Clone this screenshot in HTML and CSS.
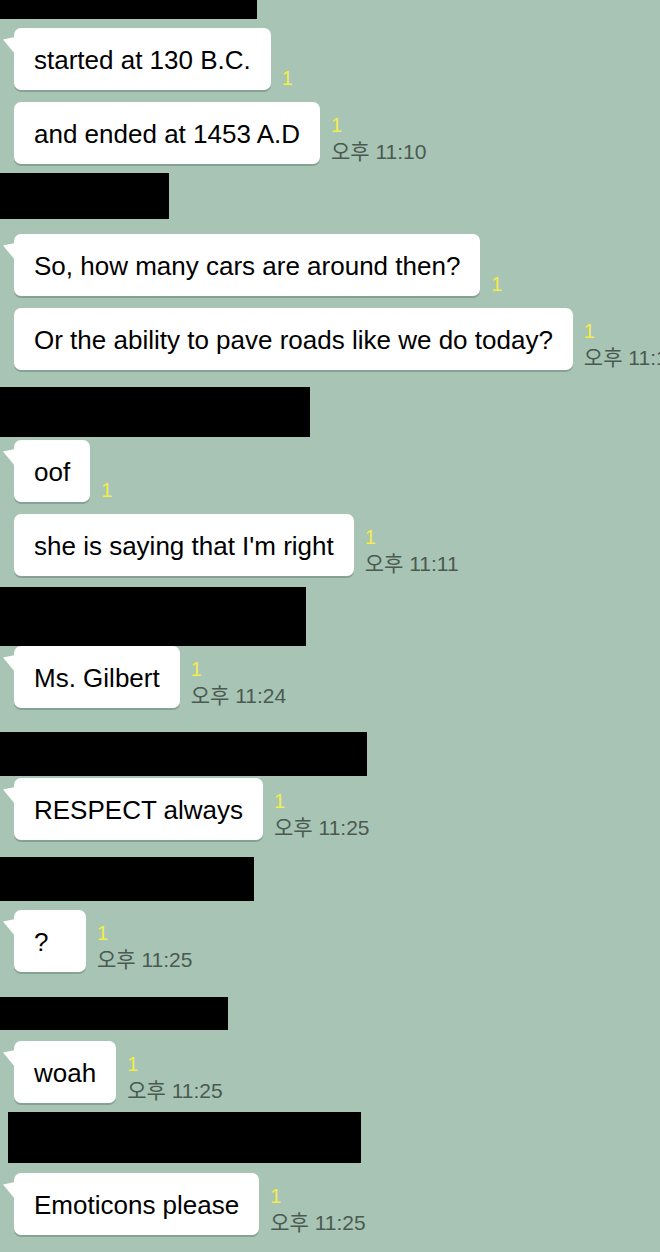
FILE: index.html
```html
<!DOCTYPE html>
<html lang="ko">
<head>
    <meta charset="UTF-8">
    <meta name="viewport" content="width=device-width, initial-scale=1.0">
    <title>Chat</title>
    <link rel="stylesheet" href="styles.css">
</head>
<body>
    <div class="chat">
        <div class="redact" style="width:257px;height:19px;margin-bottom:9px"></div>
        <div class="msg first">
            <div class="bubble">started at 130 B.C.</div>
            <div class="meta"><span class="read">1</span></div>
        </div>
        <div class="msg">
            <div class="bubble">and ended at 1453 A.D</div>
            <div class="meta"><span class="read">1</span><span class="time">오후 11:10</span></div>
        </div>

        <div class="redact" style="width:169px;height:46px;margin-top:9px;margin-bottom:15px"></div>
        <div class="msg first">
            <div class="bubble">So, how many cars are around then?</div>
            <div class="meta"><span class="read">1</span></div>
        </div>
        <div class="msg">
            <div class="bubble">Or the ability to pave roads like we do today?</div>
            <div class="meta"><span class="read">1</span><span class="time">오후 11:11</span></div>
        </div>

        <div class="redact" style="width:310px;height:50px;margin-top:17px;margin-bottom:3px"></div>
        <div class="msg first">
            <div class="bubble">oof</div>
            <div class="meta"><span class="read">1</span></div>
        </div>
        <div class="msg">
            <div class="bubble">she is saying that I'm right</div>
            <div class="meta"><span class="read">1</span><span class="time">오후 11:11</span></div>
        </div>

        <div class="redact" style="width:306px;height:59px;margin-top:11px;margin-bottom:0"></div>
        <div class="msg first">
            <div class="bubble">Ms. Gilbert</div>
            <div class="meta"><span class="read">1</span><span class="time">오후 11:24</span></div>
        </div>

        <div class="redact" style="width:367px;height:44px;margin-top:24px;margin-bottom:2px"></div>
        <div class="msg first">
            <div class="bubble">RESPECT always</div>
            <div class="meta"><span class="read">1</span><span class="time">오후 11:25</span></div>
        </div>

        <div class="redact" style="width:254px;height:44px;margin-top:17px;margin-bottom:9px"></div>
        <div class="msg first">
            <div class="bubble">?</div>
            <div class="meta"><span class="read">1</span><span class="time">오후 11:25</span></div>
        </div>

        <div class="redact" style="width:228px;height:33px;margin-top:25px;margin-bottom:11px"></div>
        <div class="msg first">
            <div class="bubble">woah</div>
            <div class="meta"><span class="read">1</span><span class="time">오후 11:25</span></div>
        </div>

        <div class="redact" style="width:353px;height:51px;margin-top:9px;margin-bottom:10px;margin-left:8px"></div>
        <div class="msg first">
            <div class="bubble">Emoticons please</div>
            <div class="meta"><span class="read">1</span><span class="time">오후 11:25</span></div>
        </div>
    </div>
</body>
</html>
```

FILE: styles.css
```css
html, body {
    margin: 0;
    padding: 0;
    background: #a8c4b5;
}

body {
    font-family: 'Liberation Sans', Arial, 'Noto Sans CJK KR', sans-serif;
    min-height: 1252px;
    overflow: hidden;
}

.chat {
    display: flex;
    flex-direction: column;
    align-items: flex-start;
    width: 660px;
}

.redact {
    background: #000;
}

.msg {
    display: flex;
    align-items: flex-end;
    margin-left: 14px;
    margin-top: 12px;
    white-space: nowrap;
}

.msg.first {
    margin-top: 0;
}

.bubble {
    position: relative;
    box-sizing: border-box;
    min-width: 72px;
    background: #fff;
    color: #000;
    font-size: 26px;
    line-height: 30px;
    padding: 17px 20px 15px;
    border-radius: 7px;
    box-shadow: 0 2px 0 rgba(70, 100, 85, 0.35);
}

/* little tail on the first bubble of a group */
.msg.first .bubble::before {
    content: "";
    position: absolute;
    left: -11px;
    top: 9px;
    width: 12px;
    height: 17px;
    background: #fff;
    clip-path: polygon(0 14%, 100% 0, 100% 100%);
}

.meta {
    display: flex;
    flex-direction: column;
    align-items: flex-start;
    margin-left: 11px;
    padding-bottom: 1px;
}

.read {
    color: #f4ec4a;
    font-size: 20px;
    line-height: 22px;
}

.time {
    color: #4a5a51;
    font-family: 'Liberation Sans', 'Noto Sans CJK KR', sans-serif;
    font-size: 21px;
    line-height: 24px;
    margin-top: 4px;
    margin-bottom: -1px;
}
```
